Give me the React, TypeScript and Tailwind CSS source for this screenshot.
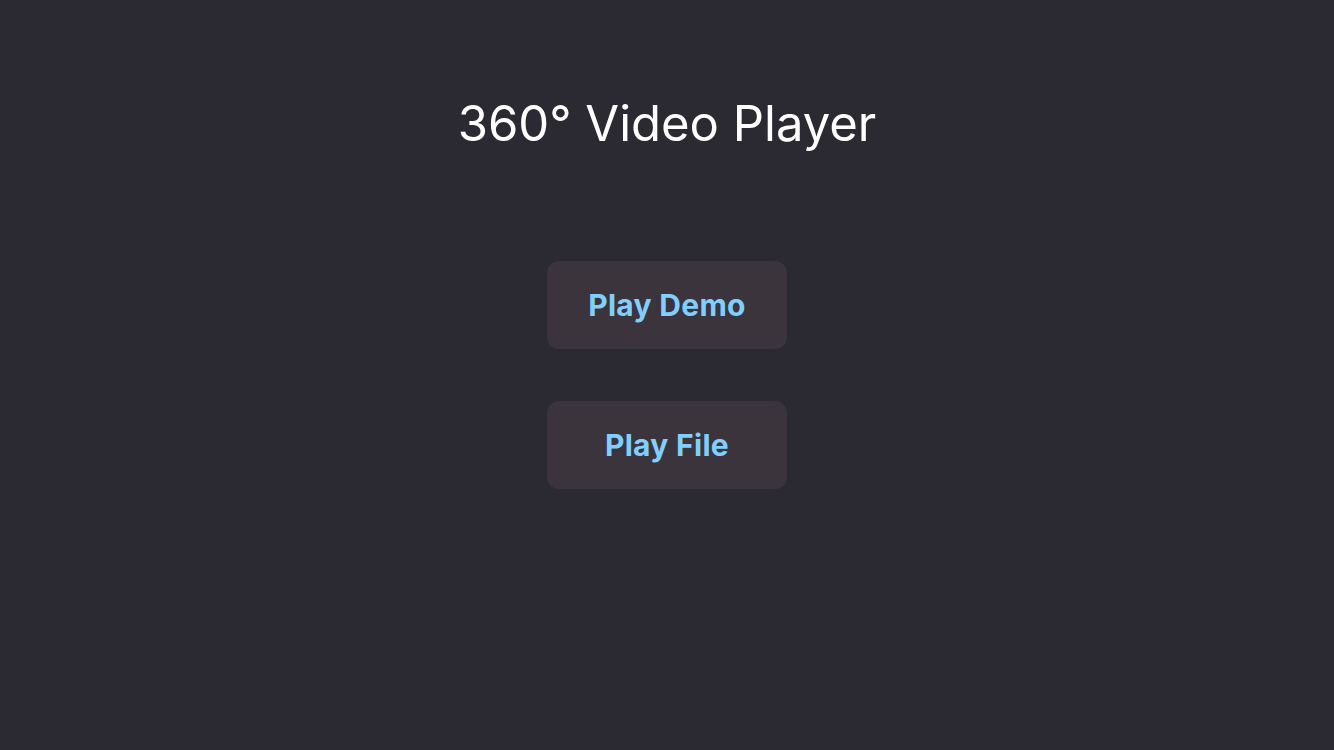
export default function App() {
  return (
    <div
      className="flex h-[750px] w-full flex-col items-center bg-[#2b2a33]"
      style={{ fontFamily: "Inter, 'Noto Sans', sans-serif" }}
    >
      <h1 className="mt-[88px] text-[49px] font-normal leading-[72px] text-white">360° Video Player</h1>

      <div className="mt-[101px] flex flex-col gap-[52px]">
        <button className="flex h-[88px] w-[240px] items-center justify-center rounded-[12px] bg-[#3b343c] text-[30px] font-bold tracking-[0.01em] text-[#80cffc]">
          Play Demo
        </button>
        <button className="flex h-[88px] w-[240px] items-center justify-center rounded-[12px] bg-[#3b343c] text-[30px] font-bold tracking-[0.01em] text-[#80cffc]">
          Play File
        </button>
      </div>
    </div>
  );
}
